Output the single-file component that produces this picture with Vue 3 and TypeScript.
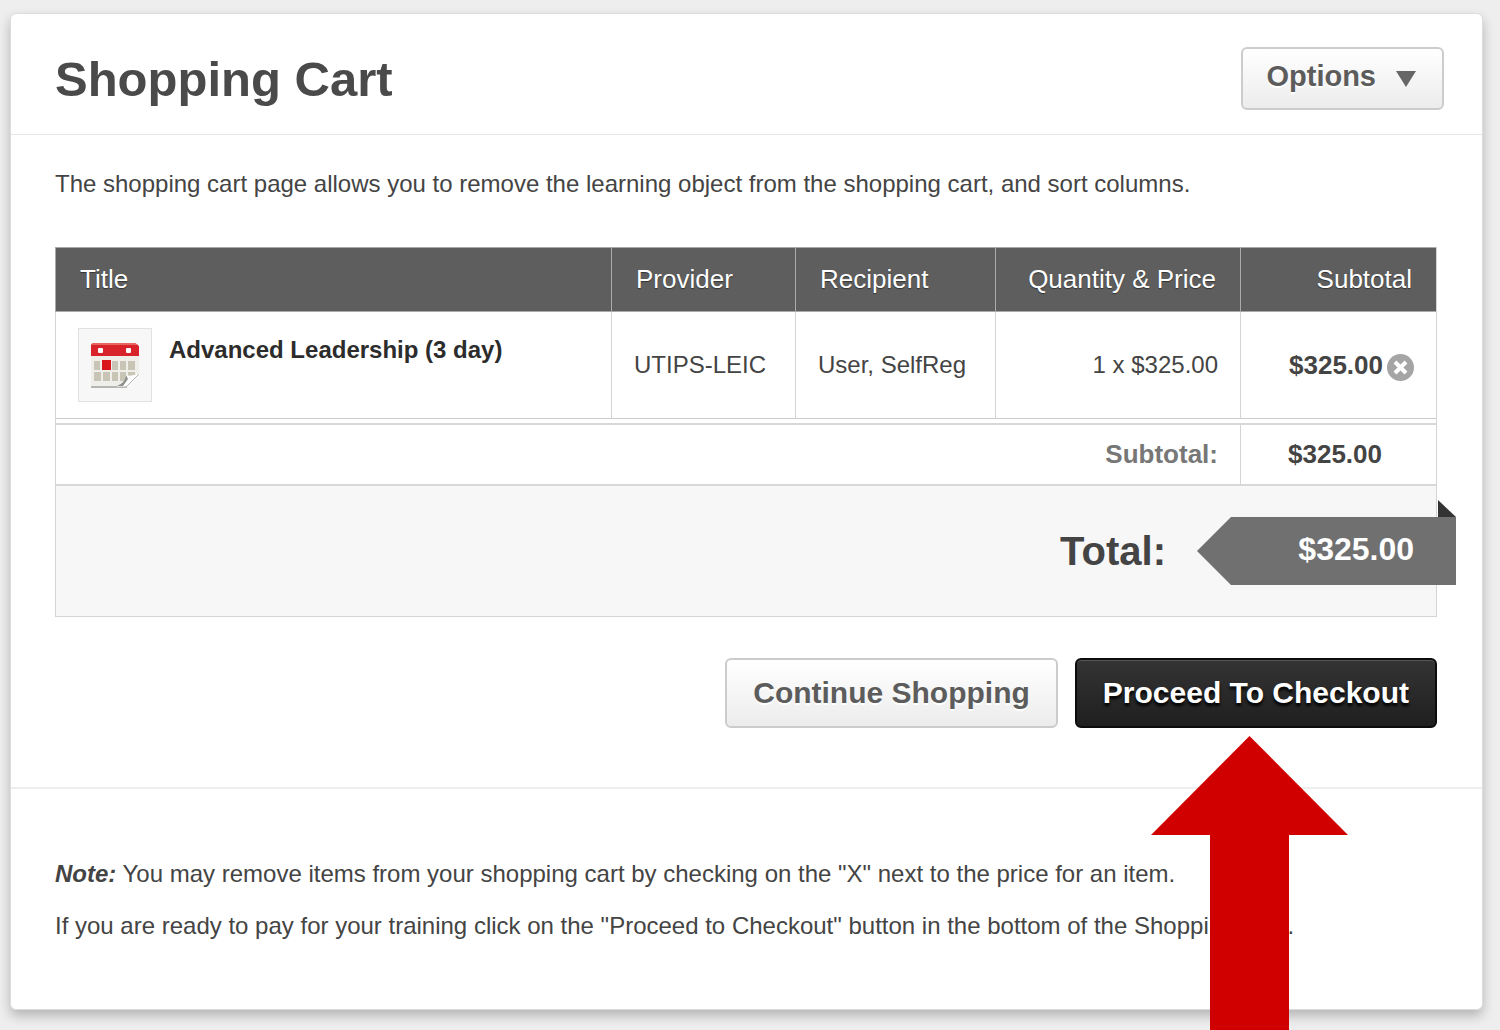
<script setup lang="ts">
interface CartItem {
  id: number
  title: string
  provider: string
  recipient: string
  quantity: number
  price: number
}

const items: CartItem[] = [
  {
    id: 1,
    title: 'Advanced Leadership (3 day)',
    provider: 'UTIPS-LEIC',
    recipient: 'User, SelfReg',
    quantity: 1,
    price: 325,
  },
]

const total = items.reduce((sum, item) => sum + item.quantity * item.price, 0)

const money = (value: number): string => `$${value.toFixed(2)}`
</script>

<template>
  <div class="page">
    <main class="card">
      <header class="card-header">
        <h1>Shopping Cart</h1>
        <button type="button" class="btn options">
          Options
          <svg width="20" height="16" viewBox="0 0 20 16" aria-hidden="true">
            <path d="M0 0H20L10 16Z" fill="#666" />
          </svg>
        </button>
      </header>

      <section class="cart">
        <p class="intro">
          The shopping cart page allows you to remove the learning object from the shopping cart, and sort columns.
        </p>

        <table>
          <colgroup>
            <col />
            <col class="col-provider" />
            <col class="col-recipient" />
            <col class="col-quantity" />
            <col class="col-subtotal" />
          </colgroup>
          <thead>
            <tr>
              <th scope="col">Title</th>
              <th scope="col">Provider</th>
              <th scope="col">Recipient</th>
              <th scope="col" class="num">Quantity &amp; Price</th>
              <th scope="col" class="num">Subtotal</th>
            </tr>
          </thead>
          <tbody>
            <tr v-for="item in items" :key="item.id">
              <td>
                <div class="product">
                  <span class="thumb">
                    <svg width="52" height="48" viewBox="0 0 52 48" aria-hidden="true">
                      <path d="M2 14H50V34L37 46H2Z" fill="#efeee9" />
                      <path d="M2 45H38V47H2Z" fill="#b5b5b3" />
                      <path d="M2 5Q2 2 5 2H46L50 5V15H2Z" fill="#d9232a" />
                      <path d="M4 2H46L49 4H3Z" fill="#e8655f" />
                      <rect x="9" y="7" width="5" height="5" rx="1" fill="#fff" />
                      <rect x="37" y="7" width="5" height="5" rx="1" fill="#fff" />
                      <g fill="#c9c5b6">
                        <rect x="5" y="20" width="6" height="9" />
                        <rect x="23" y="20" width="6" height="9" />
                        <rect x="31" y="20" width="6" height="9" />
                        <rect x="39" y="20" width="7" height="9" />
                        <rect x="5" y="31" width="7" height="9" />
                        <rect x="14" y="31" width="7" height="9" />
                        <rect x="23" y="31" width="6" height="9" />
                        <rect x="31" y="31" width="6" height="9" />
                        <rect x="39" y="31" width="7" height="5" />
                      </g>
                      <rect x="13" y="19" width="9" height="10" fill="#d9161c" />
                      <path d="M28 46Q36 42 37 34Q42 36 51 32L37 46Z" fill="#fff" />
                      <path d="M28 45Q36 42 37 34L39 38L34 45Z" fill="#8f8f8c" />
                      <path d="M50 33L37 46H30" fill="none" stroke="#b5b5b3" stroke-width="1" />
                    </svg>
                  </span>
                  <strong>{{ item.title }}</strong>
                </div>
              </td>
              <td>{{ item.provider }}</td>
              <td>{{ item.recipient }}</td>
              <td class="num">{{ item.quantity }} x {{ money(item.price) }}</td>
              <td class="num amount">
                <div class="amount-line">
                  <span>{{ money(item.quantity * item.price) }}</span>
                  <button type="button" class="remove" aria-label="Remove item">
                    <svg width="27" height="27" viewBox="0 0 27 27" aria-hidden="true">
                      <circle cx="13.5" cy="13.5" r="13.5" fill="#a5a5a5" />
                      <path d="M8 8L19 19M19 8L8 19" stroke="#fff" stroke-width="4" />
                    </svg>
                  </button>
                </div>
              </td>
            </tr>
          </tbody>
          <tfoot>
            <tr class="gap-row" aria-hidden="true">
              <td colspan="5"></td>
            </tr>
            <tr class="subtotal-row">
              <th scope="row" colspan="4" class="num">Subtotal:</th>
              <td class="amount">{{ money(total) }}</td>
            </tr>
            <tr class="total-row">
              <td colspan="5">
                <div class="total">
                  <strong>Total:</strong>
                  <span class="ribbon"><span class="ribbon-face">{{ money(total) }}</span></span>
                </div>
              </td>
            </tr>
          </tfoot>
        </table>

        <div class="actions">
          <button type="button" class="btn action">Continue Shopping</button>
          <button type="button" class="btn action primary">Proceed To Checkout</button>
        </div>
      </section>

      <section class="notes">
        <p><strong><em>Note:</em></strong> You may remove items from your shopping cart by checking on the "X" next to the price for an item.</p>
        <p>If you are ready to pay for your training click on the "Proceed to Checkout" button in the bottom of the Shopping Cart.</p>
      </section>
    </main>

    <div class="arrow" aria-hidden="true">
      <span class="arrow-head"></span>
      <span class="arrow-shaft"></span>
    </div>
  </div>
</template>

<style>
body {
  margin: 0;
  background: #eee;
}
</style>

<style scoped>
.page {
  position: relative;
  box-sizing: border-box;
  min-height: 100vh;
  padding: 13px 17px 20px 10px;
  overflow: hidden;
  background: #eee;
  color: #444;
  font-family: "Liberation Sans", Arial, sans-serif;
  font-size: 24px;
  line-height: 32px;
}

.card {
  border: 1px solid #ddd;
  border-radius: 6px;
  background: #fff;
  box-shadow: 0 6px 12px rgba(0, 0, 0, 0.24);
}

.card-header {
  display: flex;
  align-items: center;
  justify-content: space-between;
  padding: 33px 38px 24px 44px;
  border-bottom: 1px solid #e6e6e6;
}

h1 {
  margin: 0;
  color: #4a4a4a;
  font-size: 49px;
  line-height: 56px;
}

.btn {
  border: 2px solid #ccc;
  border-radius: 6px;
  background: linear-gradient(#fff, #ececec);
  color: #5c5c5c;
  font-family: inherit;
  font-weight: bold;
  text-shadow: 0 2px 0 #fff;
  white-space: nowrap;
}

.options {
  display: flex;
  align-items: center;
  gap: 20px;
  padding: 10px 26px 15px 23px;
  font-size: 29px;
  line-height: 34px;
}

.options svg {
  margin-top: 6px;
}

.cart {
  padding: 33px 45px 59px 44px;
  border-bottom: 2px solid #eee;
}

.intro {
  margin: 0 0 47px;
}

table {
  width: 100%;
  table-layout: fixed;
  border-collapse: separate;
  border-spacing: 0;
  border-right: 1px solid #d4d4d4;
}

.col-provider {
  width: 184px;
}

.col-recipient {
  width: 200px;
}

.col-quantity {
  width: 245px;
}

.col-subtotal {
  width: 196px;
}

th,
td {
  padding: 0 22px;
  border-left: 1px solid #d4d4d4;
  text-align: left;
  white-space: nowrap;
}

.num {
  text-align: right;
}

thead th {
  padding: 15px 24px 16px;
  border-top: 1px solid #aaa;
  border-bottom: 1px solid #aaa;
  border-left-color: #aaa;
  background: #5e5e5e;
  color: #fff;
  font-size: 26px;
  font-weight: normal;
  text-shadow: 0 1px 1px #333;
}

tbody td {
  height: 106px;
  border-bottom: 1px solid #ccc;
}

.product {
  display: flex;
  gap: 17px;
  color: #2c2c2c;
}

.product strong {
  padding-top: 6px;
}

.thumb {
  display: grid;
  place-items: center;
  width: 72px;
  height: 72px;
  border: 1px solid #e2e2e2;
  background: #f7f7f7;
}

.amount {
  color: #444;
  font-size: 26px;
  font-weight: bold;
}

.amount-line {
  display: flex;
  align-items: center;
  justify-content: flex-end;
  gap: 4px;
}

.remove {
  display: flex;
  padding: 4px 0 0;
  border: 0;
  background: none;
}

.gap-row td {
  height: 4px;
}

.subtotal-row th,
.subtotal-row td {
  padding-top: 13px;
  padding-bottom: 14px;
  border-top: 2px solid #d8d8d8;
}

.subtotal-row th {
  color: #777;
  font-size: 26px;
}

.subtotal-row td {
  padding-left: 47px;
}

.total-row td {
  height: 130px;
  padding-right: 0;
  border-top: 2px solid #d8d8d8;
  border-bottom: 1px solid #d4d4d4;
  background: #f7f7f7;
}

.total {
  display: flex;
  align-items: center;
  justify-content: flex-end;
  gap: 31px;
  margin-right: -20px;
  color: #444;
}

.total strong {
  font-size: 40px;
  line-height: 48px;
}

.ribbon {
  position: relative;
  flex: 0 0 259px;
}

.ribbon-face {
  display: block;
  padding: 14px 42px 18px;
  background: #707070;
  clip-path: polygon(0 50%, 34px 0, 100% 0, 100% 100%, 34px 100%);
  color: #fff;
  font-size: 32px;
  font-weight: bold;
  line-height: 36px;
  text-align: right;
}

.ribbon::before {
  content: "";
  position: absolute;
  right: 0;
  bottom: 100%;
  width: 18px;
  height: 17px;
  background: #333;
  clip-path: polygon(0 0, 100% 100%, 0 100%);
}

.actions {
  display: flex;
  justify-content: flex-end;
  gap: 17px;
  margin-top: 41px;
}

.action {
  padding: 16px 26px;
  font-size: 30px;
  line-height: 34px;
}

.primary {
  border-color: #0c0c0c;
  background: linear-gradient(#343434, #1f1f1f);
  box-shadow: inset 0 1px 0 #555;
  color: #fff;
  text-shadow: 0 3px 3px #000;
}

.notes {
  padding: 69px 45px 67px 44px;
}

.notes p {
  margin: 0 0 20px;
}

.notes p:last-child {
  margin-bottom: 0;
}

.arrow {
  position: absolute;
  top: 736px;
  right: 152px;
  bottom: 0;
  display: flex;
  flex-direction: column;
  align-items: center;
  width: 197px;
}

.arrow-head {
  width: 100%;
  height: 99px;
  background: #d10000;
  clip-path: polygon(50% 0, 100% 100%, 0 100%);
}

.arrow-shaft {
  flex: 1;
  width: 79px;
  background: #d10000;
}
</style>
